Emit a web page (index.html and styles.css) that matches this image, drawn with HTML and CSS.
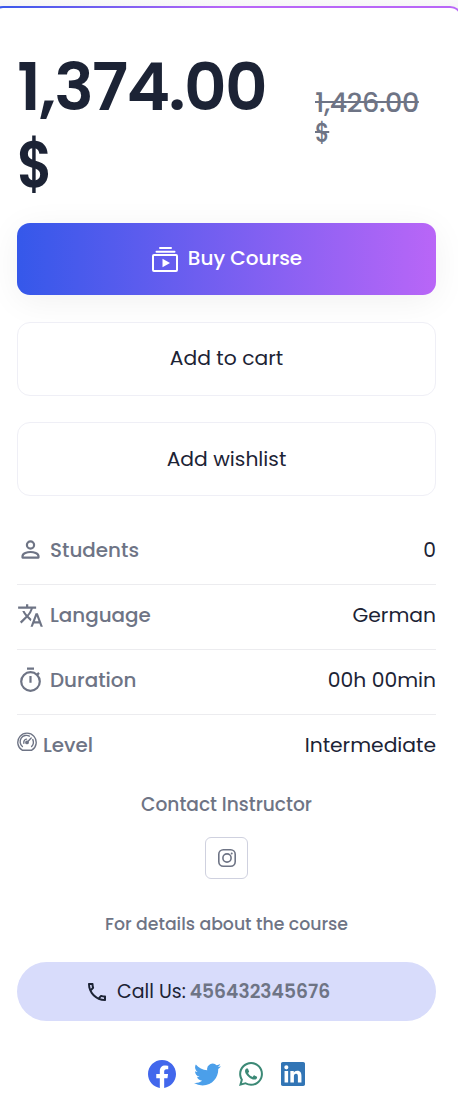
FILE: index.html
```html
<!DOCTYPE html>
<html lang="en">
<head>
<meta charset="utf-8">
<meta name="viewport" content="width=device-width, initial-scale=1">
<title>Course</title>
<link rel="stylesheet" href="styles.css">
</head>
<body>
<div class="frame">
<main class="card">
  <div class="prices">
    <div class="price">1,374.00<br><span class="currency">$</span></div>
    <div class="old-price"><s>1,426.00</s><br><s class="currency-old">$</s></div>
  </div>
  <button class="btn buy">
    <svg width="26" height="26" viewBox="0 0 26 26" fill="none" stroke="#fff" stroke-width="2"><path d="M8 2h11M4.500 5.800h18" stroke-linecap="round"/><rect x="1" y="9" width="24" height="16" rx="1"/><path d="M10.500 12.700v8.600l7.500-4.300z" fill="#fff" stroke="none"/></svg>
    <span>Buy Course</span>
  </button>
  <button class="btn outline cart">Add to cart</button>
  <button class="btn outline wish">Add wishlist</button>
  <ul class="info">
    <li>
      <svg class="ico" width="27" height="27" viewBox="0 0 27 27" fill="none" stroke="currentColor" stroke-width="2.200"><circle cx="13.500" cy="8" r="3.600"/><path d="M5.500 20.600v-1.300c0-3 4.800-4.300 8-4.300s8 1.300 8 4.300v1.300z" stroke-linejoin="round"/></svg>
      <span class="label">Students</span><span class="value">0</span>
    </li>
    <li>
      <svg class="ico" width="27" height="27" viewBox="0 0 24 24" fill="currentColor"><path d="M12.87 15.07l-2.54-2.51.03-.03A17.52 17.52 0 0014.07 6H17V4h-7V2H8v2H1v1.99h11.17C11.5 7.92 10.44 9.75 9 11.35 8.07 10.32 7.3 9.19 6.69 8h-2c.73 1.63 1.73 3.17 2.98 4.56l-5.09 5.02L4 19l5-5 3.11 3.11.76-2.04zM18.5 10h-2L12 22h2l1.12-3h4.75L21 22h2l-4.5-12zm-2.62 7l1.62-4.33L19.12 17h-3.24z"/></svg>
      <span class="label">Language</span><span class="value">German</span>
    </li>
    <li>
      <svg class="ico" width="27" height="27" viewBox="0 0 27 27" fill="none" stroke="currentColor" stroke-width="2.200"><circle cx="13.500" cy="14.500" r="9.300"/><path d="M10 1.700h7M13.500 9v6.700M19.800 8.100l2.200-2.200"/></svg>
      <span class="label">Duration</span><span class="value">00h 00min</span>
    </li>
    <li>
      <svg class="gauge" width="20" height="20" viewBox="0 0 20 20" fill="none" stroke="currentColor" stroke-width="1.400" stroke-linecap="round"><path d="M5.200 18.200A9.200 9.200 0 1 1 14.800 18.200z" stroke-linejoin="round"/><path d="M5.400 14.500A6.300 6.300 0 0 1 12.400 4.100M15.800 7.600a6.300 6.300 0 0 1-1.200 6.900M6.900 11.200a3.200 3.200 0 0 1 2.600-4.100M10.400 9.900l3.800-3.900"/><circle cx="10" cy="10.400" r="1.200" fill="currentColor"/></svg>
      <span class="label">Level</span><span class="value">Intermediate</span>
    </li>
  </ul>
  <p class="contact">Contact Instructor</p>
  <a class="insta"><svg width="18" height="18" viewBox="0 0 18 18" fill="none" stroke="currentColor" stroke-width="1.600"><rect x=".8" y=".8" width="16.400" height="16.400" rx="4.500"/><circle cx="9" cy="9" r="4.100"/><circle cx="13.700" cy="4.400" r="1" fill="currentColor" stroke="none"/></svg></a>
  <p class="details">For details about the course</p>
  <div class="call">
    <svg width="24" height="24" viewBox="0 0 24 24" fill="currentColor"><path d="M6.54 5c.06.89.21 1.76.45 2.59l-1.2 1.2c-.41-1.2-.67-2.47-.76-3.79h1.51m9.86 12.02c.85.24 1.72.39 2.6.45v1.49c-1.32-.09-2.59-.35-3.8-.75l1.2-1.19M7.5 3H4c-.55 0-1 .45-1 1 0 9.39 7.61 17 17 17 .55 0 1-.45 1-1v-3.49c0-.55-.45-1-1-1-1.24 0-2.45-.2-3.57-.57-.35-.11-.74-.03-1.02.24l-2.2 2.2c-2.83-1.45-5.15-3.76-6.59-6.59l2.2-2.2c.28-.28.36-.67.25-1.02C8.7 6.45 8.5 5.25 8.5 4c0-.55-.45-1-1-1z"/></svg>
    <span class="call-label">Call Us:</span><strong>456432345676</strong>
  </div>
  <nav class="social">
    <svg width="28" height="28" viewBox="0 0 24 24" fill="#4267ec"><path d="M24 12.07C24 5.4 18.63 0 12 0S0 5.4 0 12.07c0 6.03 4.39 11.02 10.13 11.93v-8.44H7.08v-3.49h3.05V9.41c0-3.02 1.79-4.69 4.53-4.69 1.31 0 2.68.24 2.68.24v2.97h-1.51c-1.49 0-1.96.93-1.96 1.88v2.26h3.33l-.53 3.49h-2.8V24C19.61 23.09 24 18.1 24 12.07z"/></svg>
    <svg width="27" height="27" viewBox="0 0 24 24" fill="#4b9fea"><path d="M23.95 4.57a10 10 0 01-2.82.77 4.96 4.96 0 002.16-2.72c-.95.55-2 .95-3.13 1.18a4.92 4.92 0 00-8.38 4.48C7.69 8.09 4.07 6.13 1.64 3.16a4.93 4.93 0 001.52 6.57 4.9 4.9 0 01-2.23-.61v.06a4.92 4.92 0 003.95 4.83 5 5 0 01-2.21.08 4.94 4.94 0 004.6 3.42A9.87 9.87 0 010 19.54a14 14 0 007.55 2.21c9.05 0 14-7.5 14-13.98 0-.21 0-.42-.02-.63a9.94 9.94 0 002.42-2.57z"/></svg>
    <svg width="24" height="24" viewBox="0 0 24 24" fill="#3c8976"><path d="M17.47 14.38c-.3-.15-1.76-.87-2.03-.97-.27-.1-.47-.15-.67.15-.2.3-.77.97-.94 1.16-.17.2-.35.23-.64.08-.3-.15-1.26-.46-2.39-1.48-.88-.79-1.48-1.76-1.65-2.06-.17-.3-.02-.46.13-.6.13-.14.3-.35.45-.53.15-.17.2-.3.3-.49.1-.2.05-.38-.03-.53-.07-.15-.67-1.61-.91-2.2-.25-.59-.49-.51-.67-.52h-.57c-.2 0-.52.07-.79.37-.27.3-1.04 1.02-1.04 2.48s1.06 2.87 1.21 3.07c.15.2 2.1 3.2 5.08 4.49.71.3 1.26.49 1.69.62.71.23 1.36.2 1.87.12.57-.08 1.76-.72 2-1.41.25-.7.25-1.29.18-1.42-.08-.12-.27-.2-.58-.33M12.05 21.79a9.87 9.87 0 01-5.03-1.38l-.36-.21-3.74.98 1-3.65-.24-.37a9.88 9.88 0 1118.25-5.26c0 5.45-4.43 9.89-9.88 9.89m8.41-18.3A11.82 11.82 0 0012.05 0C5.5 0 .16 5.34.16 11.89c0 2.1.55 4.14 1.59 5.95L.06 24l6.3-1.65a11.88 11.88 0 005.69 1.45c6.55 0 11.89-5.34 11.89-11.9 0-3.18-1.24-6.16-3.48-8.41z"/></svg>
    <svg width="24" height="24" viewBox="0 0 24 24" fill="#3275b5"><path d="M20.45 20.45h-3.56v-5.57c0-1.33-.02-3.04-1.85-3.04-1.85 0-2.14 1.45-2.14 2.94v5.67H9.35V9h3.42v1.56h.04c.48-.9 1.64-1.85 3.37-1.85 3.6 0 4.27 2.37 4.27 5.46v6.28zM5.34 7.43a2.06 2.06 0 110-4.13 2.06 2.06 0 010 4.13zM7.12 20.45H3.56V9h3.56v11.45zM22.23 0H1.77C.79 0 0 .77 0 1.73v20.54C0 23.23.79 24 1.77 24h20.46c.97 0 1.77-.77 1.77-1.73V1.73C24 .77 23.2 0 22.23 0z"/></svg>
  </nav>
</main>
</div>
</body>
</html>
```
FILE: styles.css
```css
* { box-sizing: border-box; }
body { margin: 0; padding-top: 6px; overflow: hidden; background: linear-gradient(#fafafa, #f6f6f6 6px); font-family: Poppins, Inter, sans-serif; font-size: 20.3px; color: #1c2335; }
.frame { margin: 0 -5px 0 -10px; padding: 2px 2px 0; border-radius: 13px 13px 0 0; background: linear-gradient(90deg, #3558ea, #b966f7 50%); }
.card { height: 1107px; padding: 41px 25px 0 25px; border-radius: 11px 11px 0 0; background: #fff; }
p { margin: 0; }
.prices { display: flex; height: 174px; }
.price { width: 298px; font-size: 66px; font-weight: 600; line-height: 77px; letter-spacing: -1.7px; white-space: nowrap; }
.currency, .currency-old { display: inline-block; transform: scaleX(.83); transform-origin: left; }
.old-price { padding-top: 39px; font-size: 27px; font-weight: 500; line-height: 30px; letter-spacing: -.4px; color: #6e7485; white-space: nowrap; }
.btn { display: flex; align-items: center; justify-content: center; width: 100%; font: inherit; color: inherit; border-radius: 13px; padding: 0; white-space: nowrap; }
.buy { gap: 10px; height: 72px; padding: 0 0 2px 1px; border: 0; color: #fff; font-size: 20px; font-weight: 500; background: linear-gradient(90deg, #3558ea, #b966f7); box-shadow: 0 6px 34px rgba(0,0,0,.06); }
.buy svg { position: relative; top: 1px; }
.outline { height: 74px; margin-top: 27px; border: 1px solid #efeff6; background: #fff; }
.cart { padding-bottom: 2px; }
.wish { margin-top: 26px; }
.info { list-style: none; margin: 24px 0 0; padding: 0; }
.info li { display: flex; align-items: center; height: 65px; padding-bottom: 4px; border-bottom: 1px solid #ececef; }
.info li:last-child { padding-bottom: 5px; border-color: transparent; }
.ico, .gauge { flex: none; color: #6e7485; margin-right: 6px; }
.gauge { position: relative; top: -3px; }
.label { color: #6e7485; font-size: 19.9px; font-weight: 500; }
.value { margin-left: auto; }
.contact { margin-top: 9px; text-align: center; font-size: 18.6px; font-weight: 500; line-height: 32px; color: #6e7485; }
.insta { display: flex; align-items: center; justify-content: center; width: 43px; height: 42px; margin: 16px auto 0; border: 1px solid #cfd1df; border-radius: 6px; color: #6e7485; }
.details { margin-top: 29px; text-align: center; font-size: 17.3px; font-weight: 500; line-height: 32px; color: #6e7485; }
.call { display: flex; align-items: center; height: 59px; margin-top: 22px; padding-left: 68px; border-radius: 30px; background: #d8dcfb; font-size: 19px; white-space: nowrap; }
.call-label { margin: 0 4px 0 8px; }
.call strong { font-size: 18.7px; font-weight: 600; color: #6e7485; }
.social { display: flex; align-items: center; gap: 18px; height: 28px; margin: 39px 0 0 131px; }
```
